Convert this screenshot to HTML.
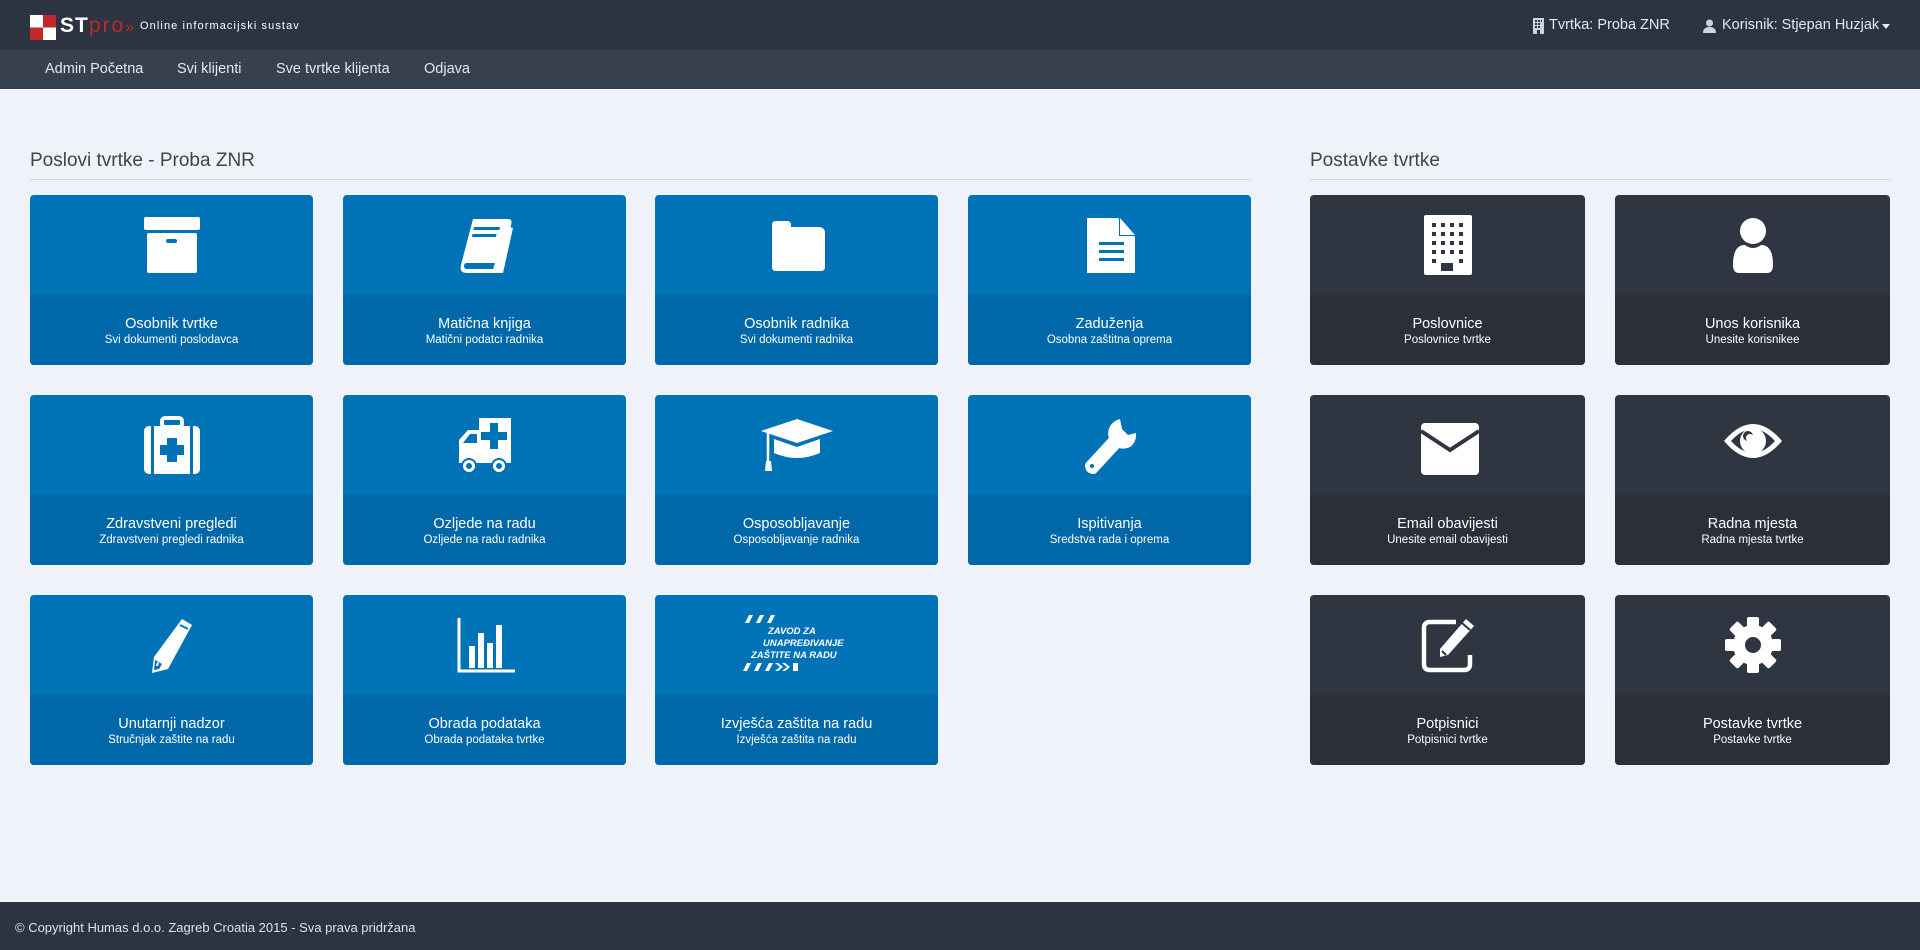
<!DOCTYPE html>
<html><head><meta charset="utf-8"><style>
*{margin:0;padding:0;box-sizing:border-box}
body{width:1920px;height:950px;background:#eff2f9;font-family:"Liberation Sans",sans-serif;position:relative;overflow:hidden}
.top{position:absolute;left:0;top:0;width:1920px;height:50px;background:#2b3440}
.nav{position:absolute;left:0;top:50px;width:1920px;height:39px;background:#36404e}
.nav a{position:absolute;top:11px;color:#e4e8ef;font-size:14.5px;text-decoration:none}
.foot{position:absolute;left:0;top:902px;width:1920px;height:48px;background:#2b3440;color:#dfe3ea;font-size:13px;padding:18px 0 0 15px}
h2{position:absolute;font-weight:normal;font-size:19px;color:#444}
.line{position:absolute;height:1px;background:#cfd3da}
.t{position:absolute;width:283px;height:170px;border-radius:4px;overflow:hidden;background:#0073b7;color:#fff;text-align:center}
.t .b{position:absolute;left:0;top:100px;width:100%;height:70px;background:#0068a8}
.t.d{width:275px;background:#2f3541}
.t.d .b{background:#2a2f3a}
.t .ti{position:absolute;top:21px;width:100%;font-size:14.5px}
.t .su{position:absolute;top:39px;width:100%;font-size:11.5px}
.t svg{position:absolute;left:50%;top:18px;margin-left:-32px}
</style></head><body>
<div class="top">
 <svg style="position:absolute;left:30px;top:15px" width="26" height="25"><rect width="26" height="25" fill="#fff"/><rect x="13" y="0" width="13" height="12.5" fill="#c1272d"/><rect x="0" y="12.5" width="13" height="12.5" fill="#c1272d"/></svg>
 <div style="position:absolute;left:60px;top:14px;font-size:21px;color:#fff;font-weight:bold;letter-spacing:1px">ST<span style="color:#c1272d;font-weight:normal;letter-spacing:2px">pro</span><span style="color:#c1272d;font-weight:normal;font-size:16px">»</span></div>
 <div style="position:absolute;left:140px;top:20px;font-size:11px;color:#fff;letter-spacing:1.1px">Online informacijski sustav</div>
 <svg style="position:absolute;left:1533px;top:18px" width="11" height="16"><rect width="11" height="16" fill="#cfd4da"/><g fill="#2b3440"><rect x="2" y="2" width="2" height="2"/><rect x="5" y="2" width="2" height="2"/><rect x="8" y="2" width="1" height="2"/><rect x="2" y="5" width="2" height="2"/><rect x="5" y="5" width="2" height="2"/><rect x="2" y="8" width="2" height="2"/><rect x="5" y="8" width="2" height="2"/><rect x="4" y="12" width="3" height="4"/></g></svg>
 <div style="position:absolute;left:1549px;top:17px;font-size:14.5px;color:#e4e8ef">Tvrtka: Proba ZNR</div>
 <svg style="position:absolute;left:1703px;top:19px" width="13" height="14"><circle cx="6.5" cy="4" r="3.5" fill="#cfd4da"/><path d="M0 14 Q0 8 6.5 8 Q13 8 13 14Z" fill="#cfd4da"/></svg>
 <div style="position:absolute;left:1722px;top:17px;font-size:14.5px;color:#e4e8ef">Korisnik: Stjepan Huzjak</div>
 <svg style="position:absolute;left:1882px;top:24px" width="8" height="5"><path d="M0 0H8L4 5Z" fill="#e4e8ef"/></svg>
</div>
<div class="nav">
 <a style="left:45px">Admin Početna</a><a style="left:177px">Svi klijenti</a><a style="left:276px">Sve tvrtke klijenta</a><a style="left:424px">Odjava</a>
</div>

<h2 style="left:30px;top:150px">Poslovi tvrtke - Proba ZNR</h2>
<div class="line" style="left:30px;top:179px;width:1220px"></div>
<h2 style="left:1310px;top:150px">Postavke tvrtke</h2>
<div class="line" style="left:1310px;top:179px;width:580px"></div>

<div class="t" style="left:30px;top:195px"><svg width="64" height="64" viewBox="0 0 64 64"><rect x="4" y="4" width="56" height="13" rx="2" fill="#fff"/><rect x="7" y="20" width="50" height="40" rx="2" fill="#fff"/><rect x="26" y="26" width="11" height="4" rx="2" fill="#0073b7"/></svg><div class="b"><div class="ti">Osobnik tvrtke</div><div class="su">Svi dokumenti poslodavca</div></div></div>
<div class="t" style="left:343px;top:195px"><svg width="64" height="64" viewBox="0 0 64 64"><path d="M20 6H55Q60 6 58 12L49 55Q48 60 43 60H14Q6 60 8 52Z" fill="#fff"/><path d="M14 50H42L40 56H14Q11 56 11 53Q11 50 14 50Z" fill="#0073b7"/><rect x="24" y="14" width="26" height="3" fill="#0073b7" transform="skewX(-12)"/><rect x="24" y="21" width="24" height="3" fill="#0073b7" transform="skewX(-12)"/><path d="M57 14 L60 15 L50 60 L45 60Z" fill="#fff"/></svg><div class="b"><div class="ti">Matična knjiga</div><div class="su">Matični podatci radnika</div></div></div>
<div class="t" style="left:655px;top:195px"><svg width="64" height="64" viewBox="0 0 64 64"><path d="M7 12Q7 8 11 8H22Q26 8 26 12V14H53Q60 14 60 20V54Q60 58 56 58H11Q7 58 7 54Z" fill="#fff"/></svg><div class="b"><div class="ti">Osobnik radnika</div><div class="su">Svi dokumenti radnika</div></div></div>
<div class="t" style="left:968px;top:195px"><svg width="64" height="64" viewBox="0 0 64 64"><path d="M9 5H40L57 24V60H9Z" fill="#fff"/><path d="M41 5V23H57" fill="#0073b7"/><path d="M42 5L57 22H42Z" fill="#fff"/><rect x="21" y="29" width="25" height="3" fill="#0073b7"/><rect x="21" y="37" width="25" height="3" fill="#0073b7"/><rect x="21" y="45" width="25" height="3" fill="#0073b7"/></svg><div class="b"><div class="ti">Zaduženja</div><div class="su">Osobna zaštitna oprema</div></div></div>

<div class="t" style="left:30px;top:395px"><svg width="64" height="64" viewBox="0 0 64 64"><rect x="22" y="5" width="20" height="9" rx="3" fill="none" stroke="#fff" stroke-width="4"/><rect x="4" y="13" width="56" height="48" rx="5" fill="#fff"/><rect x="11" y="13" width="3" height="48" fill="#0073b7"/><rect x="50" y="13" width="3" height="48" fill="#0073b7"/><path d="M27 25H37V32H44V42H37V49H27V42H20V32H27Z" fill="#0073b7"/></svg><div class="b"><div class="ti">Zdravstveni pregledi</div><div class="su">Zdravstveni pregledi radnika</div></div></div>
<div class="t" style="left:343px;top:395px"><svg width="64" height="64" viewBox="0 0 64 64"><path d="M26 5H58V50H6V27L15 17H26Z" fill="#fff"/><path d="M10 30L17 21H24V30Z" fill="#0073b7"/><path d="M37 10H45V19H54V27H45V36H37V27H28V19H37Z" fill="#0073b7"/><circle cx="16" cy="53" r="7" fill="#fff" stroke="#0073b7" stroke-width="2"/><circle cx="16" cy="53" r="3" fill="#0073b7"/><circle cx="46" cy="53" r="7" fill="#fff" stroke="#0073b7" stroke-width="2"/><circle cx="46" cy="53" r="3" fill="#0073b7"/></svg><div class="b"><div class="ti">Ozljede na radu</div><div class="su">Ozljede na radu radnika</div></div></div>
<div class="t" style="left:655px;top:395px"><svg width="64" height="64" viewBox="0 0 80 64" style="margin-left:-40px;width:80px"><path d="M40 6L76 18L40 30L4 18Z" fill="#fff"/><path d="M17 26V40Q40 50 63 40V26L40 34Z" fill="#fff"/><path d="M11 20V50" stroke="#fff" stroke-width="2.5"/><path d="M9 48H14L15 58H8Z" fill="#fff"/></svg><div class="b"><div class="ti">Osposobljavanje</div><div class="su">Osposobljavanje radnika</div></div></div>
<div class="t" style="left:968px;top:395px"><svg width="64" height="64" viewBox="0 0 64 64"><path d="M42 6A15 15 0 1 0 52 34L52 34A15 15 0 0 0 58 20L50 22L44 16Z" fill="#fff"/><path d="M34 26L10 52Q10 58 16 58L40 32Z" fill="#fff" stroke="#fff" stroke-width="6" stroke-linejoin="round"/><circle cx="14" cy="53" r="2" fill="#0073b7"/></svg><div class="b"><div class="ti">Ispitivanja</div><div class="su">Sredstva rada i oprema</div></div></div>

<div class="t" style="left:30px;top:595px"><svg width="64" height="64" viewBox="0 0 64 64"><path d="M42 6L52 12L28 56L12 60L14 44Z" fill="#fff"/><path d="M40 12L48 16" stroke="#0073b7" stroke-width="2"/><path d="M15 47L22 51L19 56L14 57Z" fill="#0073b7"/><path d="M17 49L19 50L18 53L16 53Z" fill="#fff"/></svg><div class="b"><div class="ti">Unutarnji nadzor</div><div class="su">Stručnjak zaštite na radu</div></div></div>
<div class="t" style="left:343px;top:595px"><svg width="64" height="64" viewBox="0 0 64 64"><path d="M6 5V58H62" fill="none" stroke="#fff" stroke-width="3"/><rect x="16" y="33" width="6" height="22" fill="#fff"/><rect x="25" y="20" width="6" height="35" fill="#fff"/><rect x="34" y="30" width="6" height="25" fill="#fff"/><rect x="43" y="12" width="6" height="43" fill="#fff"/></svg><div class="b"><div class="ti">Obrada podataka</div><div class="su">Obrada podataka tvrtke</div></div></div>
<div class="t" style="left:655px;top:595px">
 <svg width="120" height="64" viewBox="0 0 120 64" style="margin-left:-56px;top:16px;width:120px"><g fill="#fff"><path d="M4 12L8 4H12L8 12Z"/><path d="M15 12L19 4H23L19 12Z"/><path d="M26 12L30 4H34L30 12Z"/><path d="M2 60L6 52H10L6 60Z"/><path d="M13 60L17 52H21L17 60Z"/><path d="M24 60L28 52H32L28 60Z"/><path d="M34 52L39 56L34 60H37L42 56L37 52Z"/><path d="M41 52L46 56L41 60H44L49 56L44 52Z"/><rect x="52" y="52" width="5" height="8"/></g>
 <text x="27" y="23" font-size="9.5" font-weight="bold" font-style="italic" fill="#fff" font-family="Liberation Sans,sans-serif">ZAVOD ZA</text>
 <text x="22" y="35" font-size="9.5" font-weight="bold" font-style="italic" fill="#fff" font-family="Liberation Sans,sans-serif">UNAPREĐIVANJE</text>
 <text x="10" y="47" font-size="9.5" font-weight="bold" font-style="italic" fill="#fff" font-family="Liberation Sans,sans-serif">ZAŠTITE NA RADU</text></svg>
 <div class="b"><div class="ti">Izvješća zaštita na radu</div><div class="su">Izvješća zaštita na radu</div></div></div>

<div class="t d" style="left:1310px;top:195px"><svg width="64" height="64" viewBox="0 0 64 64"><rect x="8" y="2" width="48" height="60" rx="2" fill="#fff"/><g fill="#2f3541"><rect x="16" y="10" width="4" height="4"/><rect x="25" y="10" width="4" height="4"/><rect x="34" y="10" width="4" height="4"/><rect x="43" y="10" width="4" height="4"/><rect x="16" y="19" width="4" height="4"/><rect x="25" y="19" width="4" height="4"/><rect x="34" y="19" width="4" height="4"/><rect x="43" y="19" width="4" height="4"/><rect x="16" y="28" width="4" height="4"/><rect x="25" y="28" width="4" height="4"/><rect x="34" y="28" width="4" height="4"/><rect x="43" y="28" width="4" height="4"/><rect x="16" y="37" width="4" height="4"/><rect x="25" y="37" width="4" height="4"/><rect x="34" y="37" width="4" height="4"/><rect x="43" y="37" width="4" height="4"/><rect x="16" y="46" width="4" height="4"/><rect x="43" y="46" width="4" height="4"/><rect x="25" y="50" width="12" height="8"/></g></svg><div class="b"><div class="ti">Poslovnice</div><div class="su">Poslovnice tvrtke</div></div></div>
<div class="t d" style="left:1615px;top:195px"><svg width="64" height="64" viewBox="0 0 64 64"><circle cx="32" cy="18" r="13" fill="#fff"/><path d="M12 52Q12 32 24 32Q32 38 40 32Q52 32 52 52Q52 60 46 60H18Q12 60 12 52Z" fill="#fff"/></svg><div class="b"><div class="ti">Unos korisnika</div><div class="su">Unesite korisnikee</div></div></div>
<div class="t d" style="left:1310px;top:395px"><svg width="64" height="64" viewBox="0 0 64 64"><rect x="5" y="10" width="58" height="52" rx="4" fill="#fff"/><path d="M5 18L34 37L63 18" fill="none" stroke="#2f3541" stroke-width="4"/></svg><div class="b"><div class="ti">Email obavijesti</div><div class="su">Unesite email obavijesti</div></div></div>
<div class="t d" style="left:1615px;top:395px"><svg width="64" height="64" viewBox="0 0 64 64"><path d="M3 28Q32 -6 61 28Q32 62 3 28Z" fill="#fff"/><path d="M10 28Q32 4 54 28Q32 52 10 28Z" fill="#2f3541"/><circle cx="32" cy="28" r="13" fill="#fff"/><circle cx="27" cy="23" r="5" fill="#2f3541"/><circle cx="29" cy="25" r="4" fill="#fff"/></svg><div class="b"><div class="ti">Radna mjesta</div><div class="su">Radna mjesta tvrtke</div></div></div>
<div class="t d" style="left:1310px;top:595px"><svg width="64" height="64" viewBox="0 0 64 64"><path d="M40 9H14Q8 9 8 15V51Q8 57 14 57H48Q54 57 54 51V42" fill="none" stroke="#fff" stroke-width="4.5"/><path d="M50 6L58 13L32 42L24 44L24 36Z" fill="#fff"/><path d="M26 38L30 42" stroke="#2f3541" stroke-width="2"/><path d="M46 10L54 17" stroke="#2f3541" stroke-width="2"/></svg><div class="b"><div class="ti">Potpisnici</div><div class="su">Potpisnici tvrtke</div></div></div>
<div class="t d" style="left:1615px;top:595px"><svg width="64" height="64" viewBox="0 0 64 64"><g fill="#fff" transform="translate(32 32)"><circle r="20"/><rect x="-6" y="-28" width="12" height="56" rx="2"/><rect x="-6" y="-28" width="12" height="56" rx="2" transform="rotate(45)"/><rect x="-6" y="-28" width="12" height="56" rx="2" transform="rotate(90)"/><rect x="-6" y="-28" width="12" height="56" rx="2" transform="rotate(135)"/><circle r="8" fill="#2f3541"/></g></svg><div class="b"><div class="ti">Postavke tvrtke</div><div class="su">Postavke tvrtke</div></div></div>

<div class="foot">© Copyright Humas d.o.o. Zagreb Croatia 2015 - Sva prava pridržana</div>
</body></html>
